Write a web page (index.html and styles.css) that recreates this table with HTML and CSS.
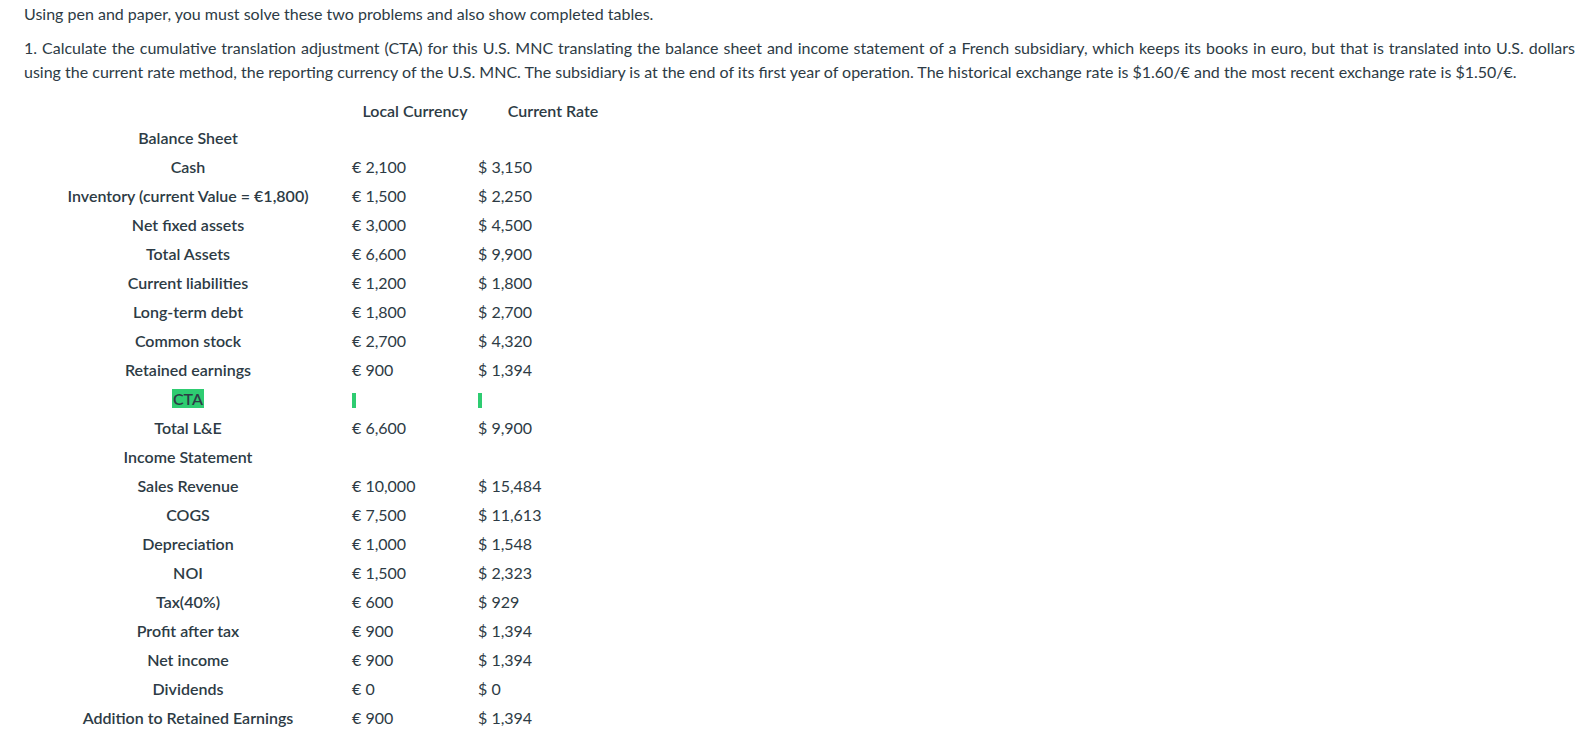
FILE: index.html
```html
<!DOCTYPE html>
<html>
<head>
<meta charset="utf-8">
<link rel="stylesheet" href="styles.css">
</head>
<body>
<div class="page">
<p class="intro">Using pen and paper, you must solve these two problems and also show completed tables.</p>
<p class="q">1. Calculate the cumulative translation adjustment (CTA) for this U.S. MNC translating the balance sheet and income statement of a French subsidiary, which keeps its books in euro, but that is translated into U.S. dollars using the current rate method, the reporting currency of the U.S. MNC. The subsidiary is at the end of its first year of operation. The historical exchange rate is $1.60/€ and the most recent exchange rate is $1.50/€.</p>
<table class="sheet">
<thead>
<tr><th class="c1"></th><th class="c2">Local Currency</th><th class="c3">Current Rate</th></tr>
</thead>
<tbody>
<tr><td class="lbl">Balance Sheet</td><td></td><td></td></tr>
<tr><td class="lbl">Cash</td><td>€ 2,100</td><td>$ 3,150</td></tr>
<tr><td class="lbl">Inventory (current Value = €1,800)</td><td>€ 1,500</td><td>$ 2,250</td></tr>
<tr><td class="lbl">Net fixed assets</td><td>€ 3,000</td><td>$ 4,500</td></tr>
<tr><td class="lbl">Total Assets</td><td>€ 6,600</td><td>$ 9,900</td></tr>
<tr><td class="lbl">Current liabilities</td><td>€ 1,200</td><td>$ 1,800</td></tr>
<tr><td class="lbl">Long-term debt</td><td>€ 1,800</td><td>$ 2,700</td></tr>
<tr><td class="lbl">Common stock</td><td>€ 2,700</td><td>$ 4,320</td></tr>
<tr><td class="lbl">Retained earnings</td><td>€ 900</td><td>$ 1,394</td></tr>
<tr><td class="lbl"><span class="hl">CTA</span></td><td><span class="bar"></span></td><td><span class="bar"></span></td></tr>
<tr><td class="lbl">Total L&amp;E</td><td>€ 6,600</td><td>$ 9,900</td></tr>
<tr><td class="lbl">Income Statement</td><td></td><td></td></tr>
<tr><td class="lbl">Sales Revenue</td><td>€ 10,000</td><td>$ 15,484</td></tr>
<tr><td class="lbl">COGS</td><td>€ 7,500</td><td>$ 11,613</td></tr>
<tr><td class="lbl">Depreciation</td><td>€ 1,000</td><td>$ 1,548</td></tr>
<tr><td class="lbl">NOI</td><td>€ 1,500</td><td>$ 2,323</td></tr>
<tr><td class="lbl">Tax(40%)</td><td>€ 600</td><td>$ 929</td></tr>
<tr><td class="lbl">Profit after tax</td><td>€ 900</td><td>$ 1,394</td></tr>
<tr><td class="lbl">Net income</td><td>€ 900</td><td>$ 1,394</td></tr>
<tr><td class="lbl">Dividends</td><td>€ 0</td><td>$ 0</td></tr>
<tr><td class="lbl">Addition to Retained Earnings</td><td>€ 900</td><td>$ 1,394</td></tr>
</tbody>
</table>
</div>
</body>
</html>
```

FILE: styles.css
```css
html, body {
  margin: 0;
  padding: 0;
  background: #ffffff;
}
.page {
  padding: 2px 20px 0 24px;
  font-family: Lato, "Liberation Sans", sans-serif;
  font-size: 16px;
  line-height: 24px;
  color: #2d3b45;
}
.page p {
  margin: 0 0 10px 0;
}
.page p.q {
  text-align: justify;
}
.sheet {
  border-collapse: collapse;
  margin-top: 14px;
}
.sheet th {
  font-weight: 600;
  text-align: center;
  padding: 0;
  height: 25px;
  line-height: 20px;
}
.sheet td {
  padding: 0;
  height: 29px;
  line-height: 20px;
  text-align: left;
  vertical-align: middle;
}
.c1 { width: 328px; }
.c2 { width: 126px; }
.c3 { width: 150px; }
.sheet td.lbl {
  text-align: center;
  font-weight: 600;
}
.hl {
  background: #2ecc71;
  padding: 0 1px;
}
.bar {
  display: inline-block;
  width: 4px;
  height: 15px;
  background: #2ecc71;
  vertical-align: middle;
}
```
